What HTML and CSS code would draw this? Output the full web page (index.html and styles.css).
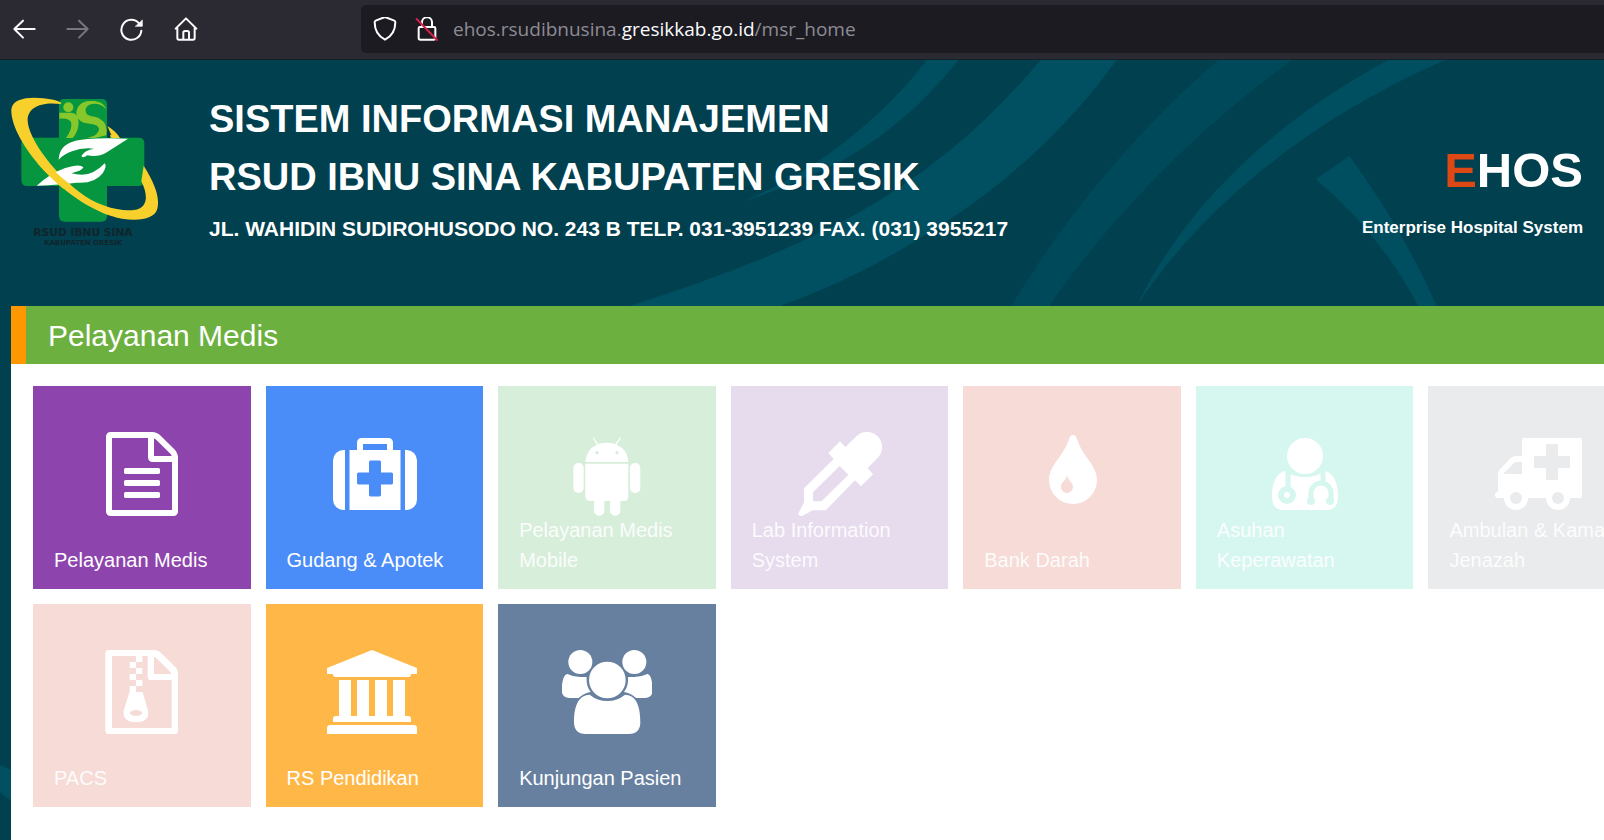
FILE: index.html
```html
<!DOCTYPE html>
<html lang="id">
<head>
<meta charset="utf-8">
<title>EHOS - RSUD Ibnu Sina Kabupaten Gresik</title>
<link rel="stylesheet" href="styles.css">
</head>
<body>
<div class="toolbar">
  <nav class="nav-buttons" aria-label="Browser">
    <button type="button" aria-label="Back"><svg class="line" viewBox="35 54 72 72"><path d="M103 90H42M68 65L42 90l26 26"/></svg></button>
    <button type="button" class="dim" aria-label="Forward"><svg class="line" viewBox="199 54 72 72"><path d="M203 90h61M238 65l26 25-26 26"/></svg></button>
    <button type="button" aria-label="Reload"><svg class="line" viewBox="361 54 72 72"><path d="M425 95a30 30 0 1 1-7-22"/><path class="solid" d="M428 64v18h-20z"/></svg></button>
    <button type="button" aria-label="Home"><svg class="line" viewBox="519 54 72 72"><path d="M524 89l31-31 31 31M529 86v31q0 5 5 5h42q5 0 5-5V86M547 121v-20q0-5 5-5h7q5 0 5 5v20"/></svg></button>
  </nav>
  <div class="address">
    <div class="site-icons">
      <svg class="line" viewBox="1119 54 72 72"><path d="M1155 54l28 11q3 1 3 5c0 22-7 40-31 52-24-12-31-30-31-52q0-4 3-5z"/></svg>
      <svg class="line" viewBox="1245 54 72 72"><path d="M1266 84V70a15 15 0 0 1 30 0v14M1260 84h42q4 0 4 4v29q0 5-5 5h-40q-5 0-5-5V88q0-4 4-4z"/><path class="slash" d="M1250 60l61 63"/></svg>
    </div>
    <span class="url">ehos.rsudibnusina.<b>gresikkab.go.id</b>/msr_home</span>
  </div>
</div>

<div class="page">
  <header class="banner">
    <svg class="swirls" viewBox="0 0 4812 738" preserveAspectRatio="xMidYMid slice" aria-hidden="true">
      <g transform="translate(1860 0)">
        <path class="thin" d="M920 0C830 120 690 250 530 345Q450 390 366 425Q500 385 640 315C790 240 920 120 1015 0z"/>
        <path class="bright" d="M1262 0C1120 170 960 310 780 420C560 555 300 650 30 738H480C640 680 780 610 900 535C1140 390 1330 220 1490 0z"/>
      </g>
      <g transform="translate(3000 0)">
        <path class="faint" d="M655 0C400 220 180 490 35 738H148C340 460 600 200 875 0z"/>
        <path class="thin" d="M1165 0C830 180 560 430 410 738C600 450 920 180 1335 0z"/>
        <path class="thin" d="M948 358L1048 288Q1210 510 1310 738H1255Q1140 520 948 358z"/>
      </g>
    </svg>
    <svg class="logo" viewBox="33 34 450 456" role="img" aria-label="RSUD Ibnu Sina">
      <path class="ring" d="M330 150q20 4 28 14l-24 2z"/>
      <path class="cross" d="M193 43H305q16 0 16 16V159H416q17 0 17 17V287q0 17-17 17H321V394q0 17-17 17H194q-17 0-17-17V304H82q-18 0-18-18V176q0-17 18-17H177V59q0-16 16-16z"/>
      <g class="leaf">
        <circle cx="205" cy="68" r="15"/>
        <path d="M178 84h38q20 2 20 32-2 27-18 44h-20q18-24 16-44-2-16-36-14z"/>
        <path d="M319 74c-8-24-34-28-58-24-32 6-42 42-20 58 16 14 52 4 56 24q0 12-16 22l-20 6h24l34-8q6-36-20-50c-18-10-40-4-42-22-4-24 38-34 62-6z"/>
      </g>
      <path class="ring" d="M182 58C120 50 82 70 83 108C86 160 150 250 235 320C290 364 360 382 402 376C446 370 444 330 424 290L431 243C466 298 480 340 472 372C464 402 420 410 366 402C290 388 200 330 130 255C70 190 32 120 34 74C38 42 84 36 130 41Q164 44 184 54z"/>
      <path class="ring" d="M322 124q26 16 38 36h-22z"/>
      <path class="hand" d="M176 225Q178 182 222 170Q260 158 384 162Q350 184 318 204Q294 218 262 212Q248 222 244 214Q254 196 282 192Q246 188 216 200Q192 208 176 225z"/>
      <path class="hand" d="M110 303Q154 264 196 250Q240 236 250 248Q248 258 214 266Q254 276 280 262Q302 250 314 236Q322 244 308 266Q284 298 230 294Q180 300 110 303z"/>
      <path class="ring" d="M112 235Q150 280 190 312L212 300Q160 262 134 222z"/>
      <text class="logo-name" x="249" y="455" text-anchor="middle">RSUD IBNU SINA</text>
      <text class="logo-place" x="249" y="482" text-anchor="middle">KABUPATEN GRESIK</text>
    </svg>
    <div class="titles">
      <h1>SISTEM INFORMASI MANAJEMEN<br>RSUD IBNU SINA KABUPATEN GRESIK</h1>
      <p>JL. WAHIDIN SUDIROHUSODO NO. 243 B TELP. 031-3951239 FAX. (031) 3955217</p>
    </div>
    <div class="brand">
      <strong><span>E</span>HOS</strong>
      <p>Enterprise Hospital System</p>
    </div>
  </header>

  <main class="panel">
    <h2>Pelayanan Medis</h2>
    <div class="tiles">
      <a href="#" class="tile purple">
        <svg viewBox="0 0 1792 1792"><path d="M1596 380q28 28 48 76t20 88v1152q0 40-28 68t-68 28h-1344q-40 0-68-28t-28-68v-1600q0-40 28-68t68-28h896q40 0 88 20t76 48zm-444-244v376h376q-10-29-22-41l-313-313q-12-12-41-22zm384 1528v-1024h-416q-40 0-68-28t-28-68v-416h-768v1536h1280zm-1024-864q0-14 9-23t23-9h704q14 0 23 9t9 23v64q0 14-9 23t-23 9h-704q-14 0-23-9t-9-23v-64zm736 224q14 0 23 9t9 23v64q0 14-9 23t-23 9h-704q-14 0-23-9t-9-23v-64q0-14 9-23t23-9h704zm0 256q14 0 23 9t9 23v64q0 14-9 23t-23 9h-704q-14 0-23-9t-9-23v-64q0-14 9-23t23-9h704z"/></svg>
        <span>Pelayanan Medis</span>
      </a>
      <a href="#" class="tile blue">
        <svg viewBox="0 0 1792 1792"><path d="M1280 1088v-192q0-14-9-23t-23-9h-224v-224q0-14-9-23t-23-9h-192q-14 0-23 9t-9 23v224h-224q-14 0-23 9t-9 23v192q0 14 9 23t23 9h224v224q0 14 9 23t23 9h192q14 0 23-9t9-23v-224h224q14 0 23-9t9-23zm-640-704h512v-128h-512v128zm-384 0v1280h-32q-92 0-158-66t-66-158v-832q0-92 66-158t158-66h32zm1184 0v1280h-1088v-1280h160v-160q0-40 28-68t68-28h576q40 0 68 28t28 68v160h160zm352 224v832q0 92-66 158t-158 66h-32v-1280h32q92 0 158 66t66 158z"/></svg>
        <span>Gudang &amp; Apotek</span>
      </a>
      <a href="#" class="tile green off">
        <svg viewBox="224 156 252 252"><path d="M285 246q2-38 35-52l-13-19q0-3 3-2l14 19q26-8 51 0l13-19q4-1 4 2l-13 19q34 15 35 52z"/><path d="M285 251H414v98q0 14-14 14H390v29a15.500 15.500 0 0 1-31 0V363H342v29a15.500 15.500 0 0 1-31 0V363H299q-14 0-14-14z"/><rect x="249" y="249" width="31" height="90" rx="15"/><rect x="419" y="249" width="31" height="90" rx="15"/><circle class="cut" cx="320" cy="218" r="5"/><circle class="cut" cx="380" cy="218" r="5"/></svg>
        <span>Pelayanan Medis Mobile</span>
      </a>
      <a href="#" class="tile lilac off">
        <svg viewBox="921 155 252 252"><path fill-rule="evenodd" d="M1096 168A45 45 0 0 1 1160 232L1130 264 1146 282 1110 318 1092 300 1004 390H965L932 408Q926 408 921 401L939 366V324L1028 236 1012 218 1047 183 1063 200zM1046 257L966 336V363H992L1072 283z"/></svg>
        <span>Lab Information System</span>
      </a>
      <a href="#" class="tile pink off">
        <svg viewBox="0 0 84 84"><path d="M42 3q-3 0-4 4c-5 17-20 26-20 41a24 24 0 0 0 48 0c0-15-15-24-20-41q-1-4-4-4z"/><path class="cut" d="M36 43c-1 6-6 7-6 12a6 6 0 0 0 12 0c0-5-5-6-6-12z"/></svg>
        <span>Bank Darah</span>
      </a>
      <a href="#" class="tile mint off">
        <svg viewBox="0 0 84 84"><path d="M22 39C14 41 9 50 9 64Q9 78 20 78H64Q75 78 75 64C75 50 70 41 62 39Q54 45 42 45T22 39z"/><circle cx="42" cy="24" r="20" class="cut"/><circle cx="42" cy="24" r="18"/><path class="wire" d="M25 38V55M60 38V51M48 69V61a10 10 0 0 1 20 0V69"/><circle class="cut" cx="24" cy="63" r="9"/><circle cx="24" cy="63" r="3"/><circle class="cut" cx="48" cy="69" r="4"/><circle class="cut" cx="67" cy="69" r="4"/></svg>
        <span>Asuhan Keperawatan</span>
      </a>
      <a href="#" class="tile gray off">
        <svg class="w90" viewBox="0 0 90 84"><path d="M31 6H87q2 0 2 2V64q0 2-2 2H5q-3 0-3-3t3-3V42q0-3 2-5L18 26q2-2 5-2h6V8q0-2 2-2z"/><circle cx="23" cy="66" r="12"/><circle cx="65" cy="66" r="12"/><circle class="cut" cx="23" cy="66" r="6"/><circle class="cut" cx="65" cy="66" r="6"/><path class="cut" d="M53 12h12v12h12v12H65v12H53V36H41V24h12zM29 30v12H11V41L22 30z"/></svg>
        <span>Ambulan &amp; Kamar Jenazah</span>
      </a>
      <a href="#" class="tile pink off">
        <svg viewBox="299 177 252 252"><path fill-rule="evenodd" d="M325 177H463q9 0 16 6L526 229q7 8 7 18V419q0 10-10 10H325q-10 0-10-10V187q0-10 10-10zM335 195V411H514V267H452q-10 0-10-10V195zM461 197V249H513Q512 245 508 241L470 203Q466 199 461 197z"/><path d="M407 195h19v18h-19zM388 213h19v18h-19zM407 231h19v18h-19zM388 249h19v18h-19zM407 267h19v18h-19zM388 285h19v18h16q4 0 5 4l15 52q5 34-36 34t-37-34l18-58z"/><ellipse class="cut" cx="407" cy="366" rx="18" ry="9"/></svg>
        <span>PACS</span>
      </a>
      <a href="#" class="tile orange">
        <svg class="w96" viewBox="978 177 288 252"><path d="M1113 177L1248 231V249H1230Q1230 258 1222 258H1004Q996 258 996 249H978V231zM1014 267h36V375h18V267h36V375h18V267h36V375h18V267h36V375h10q8 0 8 8v10H996V383q0-8 8-8h10zM988 402H1238q10 0 10 10v17H978V412q0-10 10-10z"/></svg>
        <span>RS Pendidikan</span>
      </a>
      <a href="#" class="tile slate">
        <svg class="w90" viewBox="214 177 270 252"><circle cx="269" cy="213" r="36"/><circle cx="431" cy="213" r="36"/><path d="M230 249Q248 258 269 258T288 258Q286 286 300 303Q280 306 264 321H236Q213 319 213 297C214 276 217 252 230 249zM470 249Q452 258 431 258T412 258Q414 286 400 303Q420 306 436 321H464Q486 319 486 297C485 276 483 252 470 249z"/><circle cx="350" cy="267" r="55"/><path d="M297 311Q320 330 350 330T403 311C440 312 449 352 449 393Q449 429 414 429H285Q250 429 250 393C250 352 260 312 297 311z"/></svg>
        <span>Kunjungan Pasien</span>
      </a>
    </div>
  </main>
  <svg class="edge" viewBox="0 0 11 36" aria-hidden="true"><path d="M0 0L11 5V36L0 27z"/></svg>
</div>
</body>
</html>
```

FILE: styles.css
```css
* { box-sizing: border-box; }

body {
  margin: 0;
  min-height: 100vh;
  display: flex;
  flex-direction: column;
  overflow: hidden;
  background: #00404f;
  color: #fff;
  font-family: "Liberation Sans", Arial, sans-serif;
}

h1, h2, p { margin: 0; }

/* Browser toolbar */
.toolbar {
  display: flex;
  align-items: center;
  height: 60px;
  padding: 5px 0 6px 12px;
  background: #2b2a33;
  border-bottom: 1px solid #14222b;
}
.nav-buttons { display: flex; gap: 30px; }
.nav-buttons button {
  display: flex;
  padding: 0;
  border: 0;
  background: none;
  color: #fbfbfe;
}
.nav-buttons .dim { color: #77767e; }
.toolbar svg { width: 24px; height: 24px; flex: none; }
.line {
  fill: none;
  stroke: currentColor;
  stroke-width: 6;
  stroke-linecap: round;
  stroke-linejoin: round;
}
.line .solid { fill: currentColor; stroke-width: 2; }
.line .slash { stroke: #d0214a; }
.address {
  display: flex;
  flex: 1;
  align-items: center;
  align-self: stretch;
  margin-left: 163px;
  padding-left: 12px;
  gap: 14px;
  border-radius: 5px 0 0 5px;
  background: #1c1b22;
}
.site-icons { display: flex; gap: 18px; }
.url {
  color: #8d8c93;
  font: 19px/28px "Open Sans", "Noto Sans", sans-serif;
  white-space: nowrap;
}
.url b { color: #fbfbfe; font-weight: 400; }

/* Page */
.page {
  position: relative;
  flex: 1;
  display: flex;
  flex-direction: column;
  padding-left: 11px;
}
.banner {
  position: relative;
  display: flex;
  min-height: 246px;
  padding: 30px 21px 24px 0;
}
.swirls {
  position: absolute;
  inset: 0 0 0 -11px;
  width: calc(100% + 11px);
  height: 100%;
}
.bright { fill: #005062; }
.thin { fill: #004f61; }
.faint { fill: #00495b; }
.logo { position: relative; width: 150px; height: 152px; margin-top: 6px; flex: none; }
.cross { fill: #069640; }
.leaf { fill: #86c82c; }
.ring { fill: #f8d02c; }
.hand { fill: #fff; }
.logo-name, .logo-place { fill: #10252c; font-family: "DejaVu Sans", sans-serif; font-weight: 700; }
.logo-name { font-size: 32px; }
.logo-place { font-size: 21px; }

.titles { position: relative; flex: 1; margin-left: 48px; }
.titles h1 { font-size: 38px; line-height: 58px; font-weight: 700; }
.titles p { margin-top: 8px; font-size: 21px; line-height: 30px; font-weight: 700; }
.brand { position: relative; margin-top: 49px; text-align: right; }
.brand strong { display: block; font-size: 49px; line-height: 62px; }
.brand strong span { color: #dd4814; }
.brand p { margin-top: 15px; font-size: 17px; line-height: 24px; font-weight: 700; }

.panel { flex: 1; overflow: hidden; background: #fff; }
.panel h2 {
  padding: 1px 22px 0;
  border-left: 15px solid #ff9800;
  background: #6cb040;
  font-size: 30px;
  line-height: 57px;
  font-weight: 400;
}
.tiles {
  display: grid;
  grid-template-columns: repeat(7, 1fr);
  gap: 15px;
  margin: 22px -42px 22px 22px;
}
.tile {
  display: grid;
  height: 203px;
  padding: 46px 20px 14px 21px;
  background: var(--tile);
  color: #fff;
  font-size: 20px;
  line-height: 30px;
  text-decoration: none;
}
.tile svg {
  grid-area: 1 / 1;
  justify-self: center;
  width: 84px;
  height: 84px;
  fill: #fff;
}
.tile svg.w90 { width: 90px; }
.tile svg.w96 { width: 96px; }
.tile span { grid-area: 1 / 1; align-self: end; }
.tile .cut { fill: var(--tile); }
.tile .wire { fill: none; stroke: var(--tile); stroke-width: 5; }

.purple { --tile: #8e44ad; }
.blue { --tile: #4b8df8; }
.green { --tile: #d7eedb; }
.lilac { --tile: #e7dbee; }
.pink { --tile: #f6dbd7; }
.mint { --tile: #d6f7f0; }
.gray { --tile: #e9ebed; }
.orange { --tile: #ffb848; }
.slate { --tile: #67809f; }
.off span { opacity: .9; }

/* Backdrop curve showing beside the panel */
.edge {
  position: absolute;
  left: 0;
  bottom: 39px;
  width: 11px;
  height: 36px;
  fill: #005062;
}
```
